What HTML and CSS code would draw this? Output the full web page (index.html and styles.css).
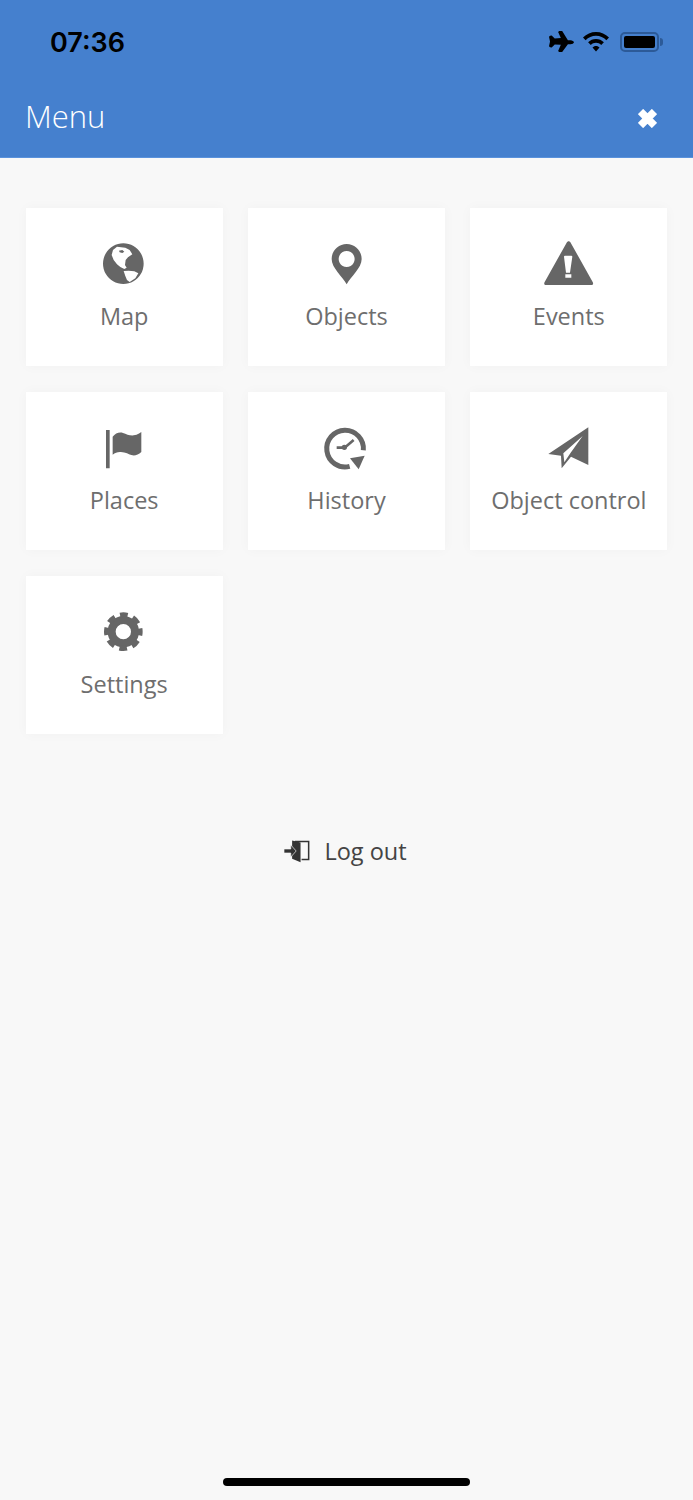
FILE: index.html
```html
<!DOCTYPE html>
<html>
<head>
<title>Menu</title>
<link rel="stylesheet" href="styles.css">
</head>
<body>
<div class="screen">
  <header class="top">
    <div class="status">
      <span class="time">07:36</span>
      <div class="status-icons">
        <svg class="plane-ic" width="25" height="22" viewBox="58 33 74 65"><path d="M97 33h-9l-3 3 8 18-18 1-9-9-5 1-3 3 3 14-3 14 3 3 5 1 9-9 18 1-8 18 3 3h9l17-23h8c5 0 9-3 10-6-1-3-5-6-10-6h-8z"/></svg>
        <svg class="wifi-ic" width="26" height="20" viewBox="0 0 26 20"><path d="M13 0C8 0 3.500 2 0 5.500l2.600 2.700C5.400 5.400 9 3.800 13 3.800s7.600 1.600 10.400 4.400L26 5.500C22.500 2 18 0 13 0zM13 7c-3 0-5.800 1.200-7.900 3.300l2.700 2.700C9.200 11.600 11 10.800 13 10.800s3.800.8 5.200 2.200l2.700-2.700C18.800 8.200 16 7 13 7zM13 14c-1.400 0-2.700.6-3.500 1.500L13 19.500l3.500-4c-.8-.9-2.100-1.500-3.500-1.500z"/></svg>
        <div class="battery"><div class="battery-fill"></div></div>
      </div>
    </div>
    <div class="title-row">
      <h1>Menu</h1>
      <svg class="close" width="19" height="19" viewBox="0 0 19 19"><path d="M2.500 2.500l14 14M16.500 2.500l-14 14"/></svg>
    </div>
  </header>

  <div class="grid">
    <a class="tile">
      <svg class="ic" viewBox="0 0 60 48"><g transform="translate(-33.67 -21) scale(.3333)">
        <path fill-rule="evenodd" d="M189 70a61 61 0 1 0 .01 0zM158 90L170 80 195 83 208 90 216 103 203 112 196 120 194 135 199 143 192 147 180 141 170 133 160 120 154 105zM176 92L186 90 192 95 186 99 178 97zM190 153L205 152 222 154 234 160 225 175 208 186 200 180 195 168z"/>
      </g></svg>
      <span>Map</span>
    </a>
    <a class="tile">
      <svg class="ic" viewBox="0 0 60 48"><g transform="translate(-16.67 -11) scale(.3333)">
        <path fill-rule="evenodd" d="M142 42C117 42 97 62 97 87c0 27 32 52 45 76 13-24 45-49 45-76 0-25-20-45-45-45zM142 63a24 24 0 1 1-.01 0z"/>
      </g></svg>
      <span>Objects</span>
    </a>
    <a class="tile">
      <svg class="ic" viewBox="0 0 60 48"><g transform="translate(-19 -11) scale(.3333)">
        <path fill-rule="evenodd" d="M140 38c3-6 9-6 12 0l66 118c3 5 1 9-5 9H79c-6 0-8-4-5-9zM132 80l6 48h12l7-48c0-2-1-3-3-3h-19c-2 0-3 1-3 3zM136 133v10h18v-10z"/>
      </g></svg>
      <span>Events</span>
    </a>
    <a class="tile">
      <svg class="ic" viewBox="0 0 60 48"><g transform="translate(-13.67 -5) scale(.3333)">
        <path d="M77 30h11v115H77zM97 50c8-10 20-15 31-11 14 5 28 12 45 3 4-2 10-6 10-6v60c-8 8-17 11-27 10-12-3-21-11-37-10-9 1-15 3-22 8z"/>
      </g></svg>
      <span>Places</span>
    </a>
    <a class="tile">
      <svg class="ic" viewBox="0 0 60 48"><g transform="translate(-6.67 -10) scale(.3333)">
        <path class="ln" stroke-width="15" d="M121 154A55 55 0 1 1 162 106"/>
        <path d="M122 130l44-8-18 41z"/>
        <path class="ln" stroke-width="8" d="M82 98h24l27-23"/>
        <circle cx="105" cy="97" r="8"/>
      </g></svg>
      <span>History</span>
    </a>
    <a class="tile">
      <svg class="ic" viewBox="0 0 60 48"><g transform="translate(-4 -10) scale(.3333)">
        <path fill-rule="evenodd" d="M160 37L40 117l38 5 2 38 28-35 52 25zM143 63L85 115l3 27 19-29z"/>
      </g></svg>
      <span>Object control</span>
    </a>
    <a class="tile">
      <svg class="ic" viewBox="0 0 60 48"><g transform="translate(-3.670 -9) scale(.3333)">
        <circle class="ln" cx="99" cy="95" r="35" stroke-width="24"/>
        <circle class="ln teeth" cx="99" cy="95" r="50" stroke-width="16"/>
      </g></svg>
      <span>Settings</span>
    </a>
  </div>

  <a class="logout">
    <svg width="27" height="24" viewBox="25 40 80 70"><path d="M52 44l25 6v58l-25-10z"/><path class="ln" stroke-width="4.500" d="M60 47h41v53H80"/><path class="arrow" d="M28 69h20V57l16 18-16 18V81H28z"/></svg>
    <span>Log out</span>
  </a>

  <div class="home-bar"></div>
</div>
</body>
</html>
```
FILE: styles.css
```css
* {
  margin: 0;
  padding: 0;
  box-sizing: border-box;
}

html, body {
  overflow: hidden;
}

body {
  font-family: "Open Sans", sans-serif;
  background-color: #f8f8f8;
}

.screen {
  display: flex;
  flex-direction: column;
  height: 100vh;
}

.top {
  height: 158px;
  background-color: #4580ce;
  border-bottom: 1px solid #5a92dc;
}

.status {
  display: flex;
  justify-content: space-between;
  align-items: center;
  height: 42px;
  margin-top: 21px;
  padding: 0 34px 0 50px;
}

.time {
  font-family: Inter, sans-serif;
  font-weight: 600;
  font-size: 27px;
  color: #000;
}

.status-icons {
  display: flex;
  align-items: center;
}

.plane-ic {
  margin-right: 9px;
}

.wifi-ic {
  margin-right: 11px;
}

.battery {
  position: relative;
  width: 39px;
  height: 20px;
  padding: 2px;
  border: 2px solid #2c5a98;
  border-radius: 5px;
}

.battery::after {
  content: "";
  position: absolute;
  top: 4px;
  right: -6px;
  width: 3px;
  height: 8px;
  background-color: #2c5a98;
  border-radius: 0 3px 3px 0;
}

.battery-fill {
  height: 100%;
  background-color: #000;
  border-radius: 2px;
}

.title-row {
  display: flex;
  justify-content: space-between;
  align-items: center;
  height: 40px;
  margin-top: 33px;
  padding: 0 36px 0 25px;
}

.title-row h1 {
  font-size: 31px;
  font-weight: 300;
  color: #fff;
}

.close {
  margin-top: 4px;
}

.close path {
  fill: none;
  stroke: #fff;
  stroke-width: 7.5;
}

.grid {
  display: grid;
  grid-template-columns: repeat(3, 1fr);
  gap: 26px 25px;
  padding: 50px 25.5px 0;
}

.tile {
  display: flex;
  flex-direction: column;
  align-items: center;
  height: 158px;
  padding-top: 33px;
  background-color: #fff;
  box-shadow: 0 0 12px rgba(0, 0, 0, 0.03);
  color: #6e6e6e;
  font-size: 23.5px;
  line-height: 32px;
}

.tile span {
  margin-top: 11px;
  white-space: nowrap;
}

.ic {
  width: 60px;
  height: 48px;
}

svg {
  display: block;
  fill: #666;
}

.status-icons svg {
  fill: #000;
}

.ln {
  fill: none;
  stroke: #666;
}

.teeth {
  stroke-dasharray: 23 16.27;
  stroke-dashoffset: 11.5;
}

.logout {
  display: flex;
  justify-content: center;
  align-items: center;
  gap: 14px;
  height: 36px;
  margin-top: 99px;
  padding-right: 3px;
  color: #444;
  font-size: 23.5px;
}

.logout svg {
  fill: #333;
}

.logout .ln {
  stroke: #333;
}

.logout .arrow {
  stroke: #f8f8f8;
  stroke-width: 2;
}

.home-bar {
  align-self: center;
  width: 247px;
  height: 8px;
  margin-top: auto;
  margin-bottom: 14px;
  background-color: #000;
  border-radius: 4px;
}
```
